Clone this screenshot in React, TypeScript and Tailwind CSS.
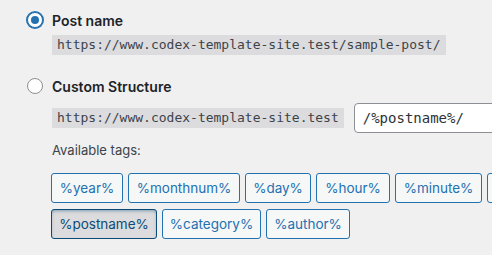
const tags: [string, string][] = [
  ['%year%', 'w-[72px]'],
  ['%monthnum%', 'w-[112px]'],
  ['%day%', 'w-[66px]'],
  ['%hour%', 'w-[74px]'],
  ['%minute%', 'w-[87px]'],
  ['%second%', 'w-[86px]'],
  ['%post_id%', 'w-[84px]'],
  ['%postname%', 'w-[106px]'],
  ['%category%', 'w-[99px]'],
  ['%author%', 'w-[84px]'],
]

function Radio({ checked }: { checked: boolean }) {
  if (checked) {
    return (
      <span className="flex h-4 w-4 shrink-0 items-center justify-center rounded-full border border-[#2271b1] bg-white shadow-[0_0_0_1px_#2271b1]">
        <span className="h-2 w-2 rounded-full bg-[#2271b1]" />
      </span>
    )
  }
  return <span className="h-4 w-4 shrink-0 rounded-full border border-[#8c8f94] bg-white" />
}

export default function App() {
  return (
    <main className="h-[255px] w-[492px] overflow-hidden bg-[#f0f0f1] pl-[27px] pt-[10px] font-['Inter',sans-serif] text-[#3c434a]">
      <div className="flex h-[20px] items-center gap-[9px]">
        <Radio checked />
        <span className="text-[14px] font-semibold text-[#1d2327]">Post name</span>
      </div>
      <div className="mt-[5px] pl-[25px]">
        <code className="block h-[20px] w-fit bg-[#dcdcde] px-[5px] font-['DejaVu_Sans_Mono',monospace] text-[13px] leading-[20px] whitespace-nowrap">
          https://www.codex-template-site.test/sample-post/
        </code>
      </div>

      <div className="mt-[21px] flex h-[20px] items-center gap-[9px]">
        <Radio checked={false} />
        <span className="text-[14px] font-semibold text-[#1d2327]">Custom Structure</span>
      </div>
      <div className="mt-[7px] pl-[25px]">
        <div className="flex h-[30px] items-center gap-[10px]">
          <code className="block h-[20px] bg-[#dcdcde] px-[5px] font-['DejaVu_Sans_Mono',monospace] text-[13px] leading-[20px] whitespace-nowrap">
            https://www.codex-template-site.test
          </code>
          <input
            type="text"
            defaultValue="/%postname%/"
            className="h-[30px] w-[300px] shrink-0 rounded-[4px] border border-[#8c8f94] bg-white px-[8px] font-['DejaVu_Sans_Mono',monospace] text-[14px] text-[#2c3338] outline-none"
          />
        </div>
        <div className="mt-[8px] h-[18px] text-[13px] leading-[18px] text-[#3c434a]">Available tags:</div>
        <div className="-ml-px mt-[14px] flex w-[640px] flex-wrap gap-x-[5px] gap-y-[6px]">
          {tags.map(([t, w]) => (
            <button
              key={t}
              type="button"
              className={
                t === '%postname%'
                  ? `h-[30px] ${w} shrink-0 whitespace-nowrap rounded-[3px] border border-[#0a4b78] bg-[#dcdcde] text-[13.5px] text-[#0a4b78] shadow-[inset_0_2px_5px_-3px_#0a4b78]`
                  : `h-[30px] ${w} shrink-0 whitespace-nowrap rounded-[3px] border border-[#2271b1] bg-[#f6f7f7] text-[13.5px] text-[#2271b1]`
              }
            >
              {t}
            </button>
          ))}
        </div>
      </div>
    </main>
  )
}
